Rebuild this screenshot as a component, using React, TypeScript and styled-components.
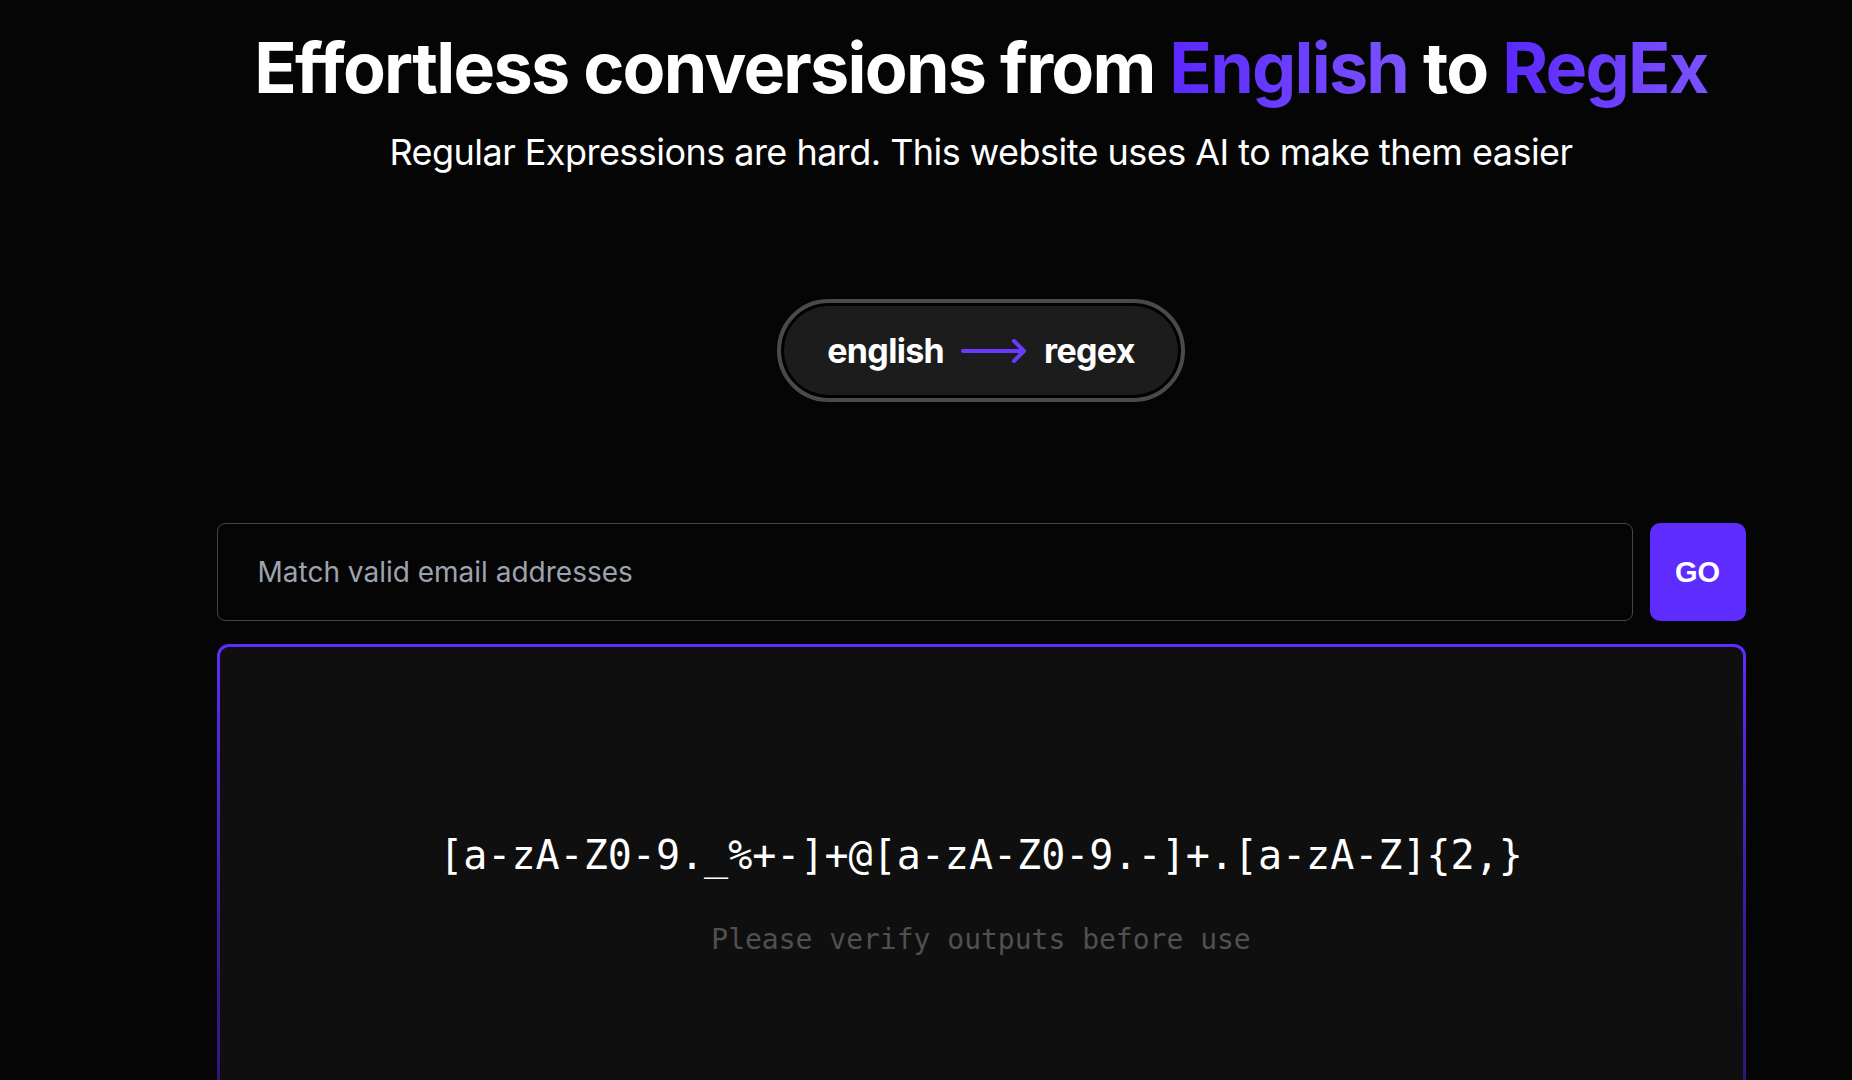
import styled, { createGlobalStyle } from 'styled-components';

const GlobalStyle = createGlobalStyle`
    html, body {
        margin: 0;
        padding: 0;
        background: #050505;
        overflow: hidden;
    }
    * {
        box-sizing: border-box;
    }
`;

const Page = styled.div`
    min-height: 100vh;
    padding-left: 110px;
    background: #050505;
    font-family: Inter, 'Noto Sans', sans-serif;
    color: #fff;
`;

const Container = styled.div`
    width: 1529px;
    margin: 0 auto;
    display: flex;
    flex-direction: column;
    align-items: center;
`;

const Title = styled.h1`
    margin: 33px 0 0;
    font-size: 70px;
    line-height: 1;
    font-weight: 700;
    letter-spacing: -0.025em;
    white-space: nowrap;
`;

const Accent = styled.span`
    background: linear-gradient(90deg, #5a28ff, #7b52ff);
    -webkit-background-clip: text;
    background-clip: text;
    color: transparent;
`;

const Subtitle = styled.p`
    margin: 31px 0 0;
    font-size: 36px;
    line-height: 1;
    font-weight: 400;
    letter-spacing: -0.015em;
`;

const Toggle = styled.button`
    margin-top: 129px;
    height: 103px;
    padding: 0 46px;
    display: flex;
    align-items: center;
    gap: 17px;
    border-radius: 52px;
    border: 4px solid #4a4a4a;
    box-shadow: inset 0 0 0 3px #000;
    background: #1c1c1c;
    color: #fff;
    font-family: Inter, sans-serif;
    font-size: 34px;
    font-weight: 700;
    letter-spacing: -0.02em;
    cursor: pointer;
`;

const Arrow = () => (
    <svg width="66" height="26" viewBox="0 0 66 26" fill="none">
        <path
            d="M2 13H63M53 3L63 13L53 23"
            stroke="#6a3bff"
            strokeWidth="4"
            strokeLinecap="round"
            strokeLinejoin="round"
        />
    </svg>
);

const InputRow = styled.div`
    margin-top: 121px;
    width: 100%;
    display: flex;
    gap: 17px;
`;

const Input = styled.input`
    flex: 1;
    height: 98px;
    padding: 0 40px;
    border: 1.5px solid #454545;
    border-radius: 8px;
    background: #050505;
    color: #fff;
    font-family: Inter, sans-serif;
    font-size: 28px;
    outline: none;

    &::placeholder {
        color: #9ca3af;
    }
`;

const GoButton = styled.button`
    width: 96px;
    height: 98px;
    border: none;
    border-radius: 10px;
    background: #5f2cff;
    color: #fff;
    font-family: 'Liberation Sans', Arial, sans-serif;
    font-size: 29px;
    font-weight: 700;
    cursor: pointer;
`;

const Output = styled.div`
    margin-top: 23px;
    width: 100%;
    height: 500px;
    border-radius: 12px;
    padding: 3px;
    background: linear-gradient(180deg, #5f2cff 0%, #3a1a8c 60%, #2d1470 100%);
`;

const OutputInner = styled.div`
    height: 100%;
    border-radius: 9px;
    background: #0f0f0f;
    display: flex;
    flex-direction: column;
    align-items: center;
    justify-content: center;
    gap: 51px;
    font-family: 'DejaVu Sans Mono', 'Liberation Mono', monospace;
`;

const Regex = styled.div`
    font-size: 40px;
    line-height: 1;
    color: #fff;
`;

const Note = styled.div`
    font-size: 28px;
    line-height: 1;
    color: #505050;
`;

export default function App() {
    return (
        <>
            <GlobalStyle />
            <Page>
                <Container>
                    <Title>
                        Effortless conversions from <Accent>English</Accent> to <Accent>RegEx</Accent>
                    </Title>
                    <Subtitle>Regular Expressions are hard. This website uses AI to make them easier</Subtitle>
                    <Toggle>
                        <span>english</span>
                        <Arrow />
                        <span>regex</span>
                    </Toggle>
                    <InputRow>
                        <Input placeholder="Match valid email addresses" />
                        <GoButton>GO</GoButton>
                    </InputRow>
                    <Output>
                        <OutputInner>
                            <Regex>[a-zA-Z0-9._%+-]+@[a-zA-Z0-9.-]+.[a-zA-Z]{'{2,}'}</Regex>
                            <Note>Please verify outputs before use</Note>
                        </OutputInner>
                    </Output>
                </Container>
            </Page>
        </>
    );
}
